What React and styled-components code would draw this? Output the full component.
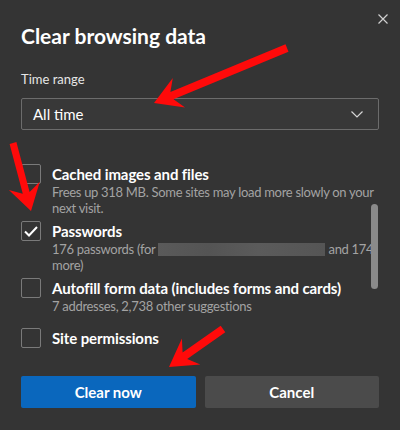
import React from "react";
import styled, { createGlobalStyle } from "styled-components";

const GlobalStyle = createGlobalStyle`
  * { box-sizing: border-box; }
  body {
    margin: 0;
    background: #343434;
    font-family: "Lato", "Noto Sans", sans-serif;
  }
`;

const Dialog = styled.div`
  position: relative;
  width: 400px;
  height: 430px;
  background: #343434;
  color: #ffffff;
  padding: 0 21px 0 21px;
  display: flex;
  flex-direction: column;
  overflow: hidden;
`;

const Header = styled.div`
  display: flex;
  justify-content: space-between;
  align-items: flex-start;
  padding-top: 24px;
`;

const Title = styled.h1`
  margin: 0;
  font-size: 21px;
  line-height: 24px;
  font-weight: 700;
`;

const CloseButton = styled.button`
  border: none;
  background: none;
  padding: 0;
  margin: -10px -9px 0 0;
  width: 10px;
  height: 10px;
  display: flex;
  color: #d0d0d0;
`;

const Label = styled.div`
  margin-top: 23px;
  font-size: 13px;
  line-height: 16px;
  color: #e6e6e6;
`;

const Select = styled.div`
  margin-top: 11px;
  height: 32px;
  border: 1px solid #6c6c6c;
  border-radius: 2px;
  background: #383838;
  display: flex;
  align-items: center;
  justify-content: space-between;
  padding: 0 15px 0 11px;
  font-size: 15px;
`;

const ScrollArea = styled.div`
  margin-top: 34px;
  display: grid;
  grid-template-columns: 1fr 8px;
  height: 190px;
`;

const List = styled.div`
  display: flex;
  flex-direction: column;
  min-width: 0;
`;

const Item = styled.div`
  display: flex;
  gap: 11px;
  height: ${(p) => p.$height}px;
`;

const Box = styled.span`
  flex: none;
  width: 20px;
  height: 20px;
  border: 1px solid #7a7a7a;
  border-radius: 2px;
  display: flex;
  align-items: center;
  justify-content: center;
`;

const Texts = styled.div`
  display: flex;
  flex-direction: column;
`;

const ItemTitle = styled.div`
  font-size: 15px;
  line-height: 20px;
  font-weight: 700;
  letter-spacing: -0.1px;
  white-space: nowrap;
`;

const ItemDesc = styled.div`
  font-size: 13px;
  line-height: 16px;
  letter-spacing: -0.3px;
  color: #a3a3a3;
  white-space: nowrap;
`;

const Blur = styled.span`
  display: inline-block;
  width: 167px;
  height: 13px;
  vertical-align: -2px;
  margin: 0 3px 0 3px;
  background: linear-gradient(90deg, #5a5a5a, #545454 30%, #5b5b5b 60%, #555555);
`;

const Track = styled.div`
  position: relative;
`;

const Thumb = styled.div`
  margin-top: 40px;
  width: 7px;
  height: 85px;
  border-radius: 4px;
  background: #8a8a8a;
`;

const Buttons = styled.div`
  margin-top: 22px;
  display: grid;
  grid-template-columns: 1fr 1fr;
  gap: 9px;
`;

const Button = styled.button`
  height: 32px;
  border: none;
  border-radius: 2px;
  font-family: inherit;
  font-size: 15px;
  font-weight: 700;
  color: #ffffff;
  background: ${(p) => (p.$primary ? "#0a67bd" : "#4b4b4b")};
`;

const Overlay = styled.svg`
  position: absolute;
  left: 0;
  top: 0;
  pointer-events: none;
`;

function arrowPoints(tail, tip, s, headLen, h) {
  const dx = tip[0] - tail[0];
  const dy = tip[1] - tail[1];
  const len = Math.hypot(dx, dy);
  const u = [dx / len, dy / len];
  const n = [-u[1], u[0]];
  const at = (base, along, side) => [
    base[0] - u[0] * along + n[0] * side,
    base[1] - u[1] * along + n[1] * side,
  ];
  const pts = [
    at(tail, 0, s),
    at(tip, headLen * 0.72, s),
    at(tip, headLen, h),
    tip,
    at(tip, headLen, -h),
    at(tip, headLen * 0.72, -s),
    at(tail, 0, -s),
  ];
  return pts.map((p) => p.map((v) => v.toFixed(1)).join(",")).join(" ");
}

const arrows = [
  { tail: [287, 48], tip: [154, 103], s: 4, head: 27, h: 16 },
  { tail: [13, 143], tip: [31, 211], s: 3.5, head: 26, h: 16 },
  { tail: [223, 329], tip: [169, 367], s: 4, head: 27, h: 16 },
];

const items = [
  {
    title: "Cached images and files",
    desc: ["Frees up 318 MB. Some sites may load more slowly on your", "next visit."],
    height: 57,
  },
  {
    title: "Passwords",
    desc: [
      <>176 passwords (for<Blur />and 174</>,
      "more)",
    ],
    checked: true,
    height: 57,
  },
  {
    title: "Autofill form data (includes forms and cards)",
    desc: ["7 addresses, 2,738 other suggestions"],
    height: 50,
  },
  { title: "Site permissions", desc: [], height: 20 },
];

export default function App() {
  return (
    <Dialog>
      <GlobalStyle />
      <Header>
        <Title>Clear browsing data</Title>
        <CloseButton aria-label="Close">
          <svg width="10" height="10" viewBox="0 0 10 10">
            <path d="M0.5 0.5L9.5 9.5M9.5 0.5L0.5 9.5" stroke="currentColor" strokeWidth="1.2" />
          </svg>
        </CloseButton>
      </Header>
      <Label>Time range</Label>
      <Select>
        <span>All time</span>
        <svg width="12" height="7" viewBox="0 0 12 7">
          <path d="M0.5 0.5L6 6L11.5 0.5" stroke="#d6d6d6" strokeWidth="1.2" fill="none" />
        </svg>
      </Select>
      <ScrollArea>
        <List>
          {items.map((it) => (
            <Item key={it.title} $height={it.height}>
              <Box>
                {it.checked && (
                  <svg width="14" height="11" viewBox="0 0 14 11">
                    <path d="M1 5.5L5 9.5L13 1" stroke="#ffffff" strokeWidth="2" fill="none" />
                  </svg>
                )}
              </Box>
              <Texts>
                <ItemTitle>{it.title}</ItemTitle>
                {it.desc.map((line, i) => (
                  <ItemDesc key={i}>{line}</ItemDesc>
                ))}
              </Texts>
            </Item>
          ))}
        </List>
        <Track>
          <Thumb />
        </Track>
      </ScrollArea>
      <Buttons>
        <Button $primary>Clear now</Button>
        <Button>Cancel</Button>
      </Buttons>
      <Overlay width="400" height="430" viewBox="0 0 400 430">
        {arrows.map((a, i) => (
          <polygon key={i} points={arrowPoints(a.tail, a.tip, a.s, a.head, a.h)} fill="#ff0a0a" />
        ))}
      </Overlay>
    </Dialog>
  );
}
